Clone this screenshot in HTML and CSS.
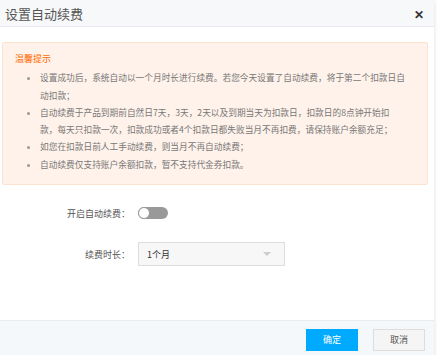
FILE: index.html
```html
<!DOCTYPE html>
<html lang="zh-CN">
<head>
  <meta charset="UTF-8">
  <title>设置自动续费</title>
  <link rel="stylesheet" href="styles.css">
</head>
<body>
  <div class="dialog">
    <div class="dialog-header">
      <span class="dialog-title">设置自动续费</span>
      <span class="close-btn">✕</span>
    </div>
    <div class="dialog-body">
      <div class="notice">
        <div class="notice-title">温馨提示</div>
        <ul class="notice-list">
          <li>设置成功后，系统自动以一个月时长进行续费。若您今天设置了自动续费，将于第二个扣款日自<br>动扣款；</li>
          <li>自动续费于产品到期前自然日7天，3天，2天以及到期当天为扣款日，扣款日的8点钟开始扣<br>款，每天只扣款一次，扣款成功或者4个扣款日都失败当月不再扣费，请保持账户余额充足；</li>
          <li>如您在扣款日前人工手动续费，则当月不再自动续费；</li>
          <li>自动续费仅支持账户余额扣款，暂不支持代金券扣款。</li>
        </ul>
      </div>
      <div class="form">
        <div class="form-row">
          <label class="form-label">开启自动续费：</label>
          <span class="switch"><span class="switch-dot"></span></span>
        </div>
        <div class="form-row">
          <label class="form-label">续费时长：</label>
          <div class="select">
            <span>1个月</span>
            <span class="caret"></span>
          </div>
        </div>
      </div>
    </div>
    <div class="dialog-footer">
      <button class="btn btn-primary">确定</button>
      <button class="btn">取消</button>
    </div>
  </div>
</body>
</html>
```
FILE: styles.css
```css
body {
  margin: 0;
  background-color: #fff;
  font-family: "Microsoft YaHei", "Noto Sans CJK SC", sans-serif;
  color: #666;
}
.dialog {
  width: 434px;
  background-color: #fff;
  box-shadow: 0 1px 4px rgba(0, 0, 0, 0.15);
}
.dialog-header {
  height: 26px;
  display: flex;
  align-items: center;
  justify-content: space-between;
  padding: 0 10px 0 5px;
  background-color: #f7f8fa;
  border-bottom: 1px solid #e8eaed;
}
.dialog-title {
  font-size: 13px;
  color: #555;
}
.close-btn {
  font-size: 12px;
  font-weight: bold;
  color: #333;
}
.dialog-body {
  height: 278px;
  padding: 15px 6px 0 2px;
}
.notice {
  background-color: #fff2ea;
  border: 1px solid #fde2cf;
  border-radius: 2px;
  padding: 7px 4px 11px 12px;
  font-size: 9px;
  line-height: 17.3px;
}
.notice-title {
  color: #ff6a00;
  margin-bottom: 2px;
}
.notice-list {
  margin: 0;
  padding-left: 25px;
}
.notice-list li {
  color: #777;
  font-size: 8.7px;
  white-space: nowrap;
}
.notice-list li::marker {
  color: #999;
}
.form {
  padding-top: 16px;
}
.form-row {
  display: flex;
  align-items: center;
  height: 24px;
  margin-bottom: 17px;
  font-size: 9px;
}
.form-label {
  width: 128px;
  text-align: right;
  padding-right: 8px;
  color: #555;
}
.switch {
  width: 30px;
  height: 12px;
  border-radius: 6px;
  background-color: #999;
  position: relative;
}
.switch-dot {
  position: absolute;
  left: 0;
  top: 0;
  width: 10px;
  height: 10px;
  border-radius: 50%;
  border: 1px solid #999;
  background-color: #fff;
}
.select {
  width: 147px;
  height: 24px;
  border: 1px solid #ddd;
  background-color: #f7f7f7;
  display: flex;
  align-items: center;
  justify-content: space-between;
  padding: 0 13px 0 8px;
  box-sizing: border-box;
  color: #333;
}
.caret {
  width: 0;
  height: 0;
  border-left: 4px solid transparent;
  border-right: 4px solid transparent;
  border-top: 4px solid #ccc;
}
.dialog-footer {
  height: 34px;
  display: flex;
  align-items: center;
  justify-content: flex-end;
  gap: 15px;
  padding-right: 9px;
  background-color: #f5f8fa;
  border-top: 1px solid #e8ecef;
}
.btn {
  width: 52px;
  height: 22px;
  margin-top: 3px;
  font-family: inherit;
  font-size: 9px;
  color: #555;
  background-color: #f5f5f5;
  border: 1px solid #ddd;
  padding: 0;
  cursor: pointer;
}
.btn-primary {
  color: #fff;
  background-color: #00aaff;
  border-color: #00aaff;
}
```
